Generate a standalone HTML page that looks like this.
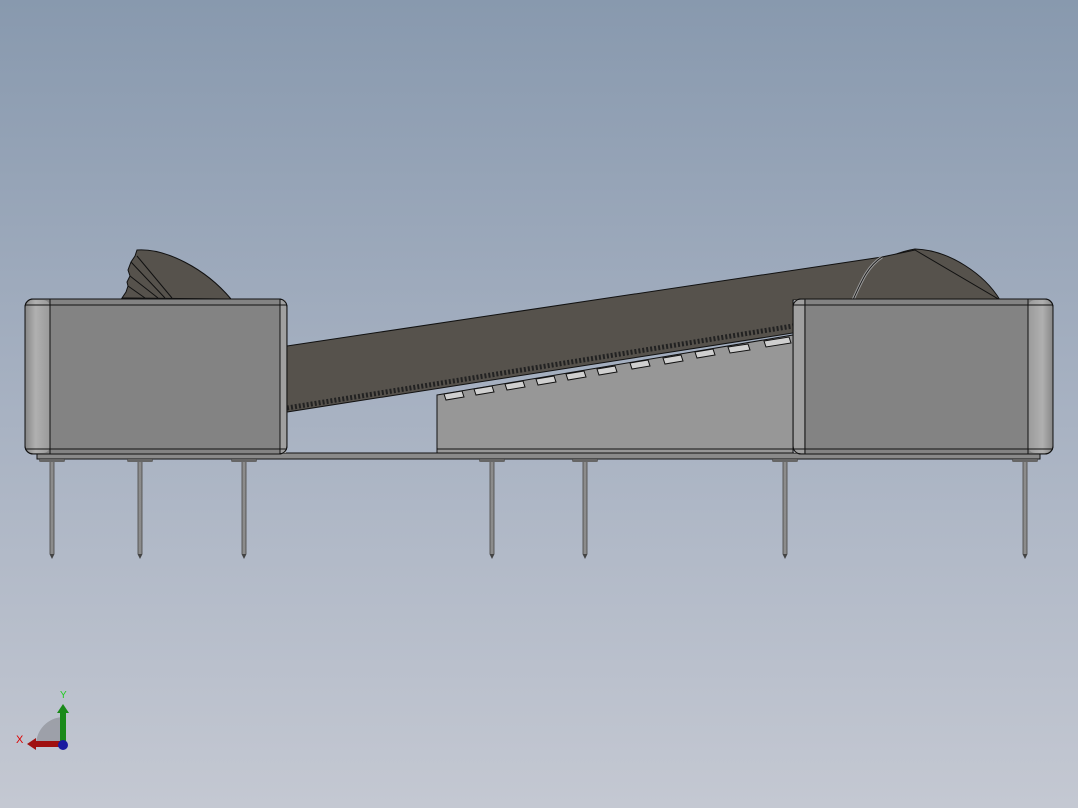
<!DOCTYPE html>
<html><head><style>
html,body{margin:0;padding:0;width:1078px;height:808px;overflow:hidden}
body{background:linear-gradient(#8899ae 0%,#a4afc0 45%,#c4c8d2 100%)}
svg{position:absolute;left:0;top:0}
</style></head><body>
<svg width="1078" height="808" viewBox="0 0 1078 808" xmlns="http://www.w3.org/2000/svg">
<defs>
<linearGradient id="pin" x1="0" x2="1"><stop offset="0" stop-color="#555"/><stop offset=".5" stop-color="#999"/><stop offset="1" stop-color="#555"/></linearGradient>
<linearGradient id="edgeL" x1="0" x2="1"><stop offset="0" stop-color="#8a8a8a"/><stop offset=".4" stop-color="#b0b0b0"/><stop offset="1" stop-color="#9a9a9a"/></linearGradient>
<linearGradient id="edgeR" x1="0" x2="1"><stop offset="0" stop-color="#9a9a9a"/><stop offset=".6" stop-color="#b0b0b0"/><stop offset="1" stop-color="#8a8a8a"/></linearGradient>
<g id="p"><rect x="-13" y="459" width="26" height="3" rx="1.5" fill="#666"/><rect x="-2.5" y="462" width="5" height="92" fill="url(#pin)"/><path d="M-2.5,554 L2.5,554 L0,559 Z" fill="#444"/></g>
</defs>
<!-- left fan -->
<g fill="#56524c" stroke="#111" stroke-width="1">
<path d="M122,298 L126,292 L128,286 L127,282 L130,276 L128,270 L131,262 L135,256 L137,250 C165,248 205,268 231,299 Z"/>
<path d="M130,276 L158,298 M131,262 L165,298 M137,256 L172,298 M128,286 L145,298" fill="none"/>
</g>
<!-- right dome -->
<path d="M855,300 C870,270 880,255 915,249 C950,250 985,275 1000,300 Z" fill="#56524c" stroke="#111"/>
<!-- middle box -->
<path d="M437,395 L793,335 L793,454 L437,454 Z" fill="#979797" stroke="#111"/>
<line x1="437" y1="449" x2="793" y2="449" stroke="#111"/>
<!-- belt -->
<path d="M287,346 L882,257 L915,250 L1000,300 L793,300 L793,333 L287,412 Z" fill="#56524c" stroke="#111"/>
<path d="M287,408 L793,326" stroke="#222" stroke-width="5" stroke-dasharray="2 2"/>
<path d="M853,300 C862,280 868,266 882,257" fill="none" stroke="#999" stroke-width="3"/>
<path d="M853,300 C862,280 868,266 882,257" fill="none" stroke="#111" stroke-width="0.8"/>
<!-- teeth -->
<g fill="#cfcfcf" stroke="#111" stroke-width="1">
<path d="M444,394 l18,-3 l2,6 l-18,3 z"/><path d="M474,389 l18,-3 l2,6 l-18,3 z"/>
<path d="M505,384 l18,-3 l2,6 l-18,3 z"/><path d="M536,379 l18,-3 l2,6 l-18,3 z"/>
<path d="M566,374 l18,-3 l2,6 l-18,3 z"/><path d="M597,369 l18,-3 l2,6 l-18,3 z"/>
<path d="M630,363 l18,-3 l2,6 l-18,3 z"/><path d="M663,358 l18,-3 l2,6 l-18,3 z"/>
<path d="M695,352 l18,-3 l2,6 l-18,3 z"/><path d="M728,347 l20,-3 l2,6 l-20,3 z"/>
<path d="M764,341 l25,-4 l2,6 l-25,4 z"/>
</g>
<!-- base strip -->
<rect x="37" y="453" width="1003" height="6" fill="#8a8a8a" stroke="#111"/>
<!-- pins -->
<use href="#p" x="52"/><use href="#p" x="140"/><use href="#p" x="244"/><use href="#p" x="492"/><use href="#p" x="585"/><use href="#p" x="785"/><use href="#p" x="1025"/>
<!-- left box -->
<rect x="25" y="299" width="262" height="155" rx="8" fill="#838383" stroke="#111"/>
<rect x="26" y="300" width="24" height="153" rx="7" fill="url(#edgeL)"/>
<rect x="280" y="300" width="6" height="153" fill="#a0a0a0"/>
<path d="M50,299 V454 M25,305 H287 M25,449 H287 M280,299 V454" stroke="#111" fill="none"/>
<rect x="25" y="299" width="262" height="155" rx="8" fill="none" stroke="#111"/>
<!-- right box -->
<rect x="793" y="299" width="260" height="155" rx="8" fill="#838383" stroke="#111"/>
<rect x="1028" y="300" width="24" height="153" rx="7" fill="url(#edgeR)"/>
<rect x="794" y="300" width="10" height="153" fill="#a0a0a0"/>
<path d="M805,299 V454 M1028,299 V454 M793,305 H1053 M793,449 H1053" stroke="#111" fill="none"/>
<rect x="793" y="299" width="260" height="155" rx="8" fill="none" stroke="#111"/>
<!-- triad -->
<path d="M36,745 A28,28 0 0 1 63,717 L63,745 Z" fill="#8f9299" opacity=".7"/>
<rect x="60" y="712" width="6" height="33" fill="#1a8a1a"/>
<path d="M57,713 L63,704 L69,713 Z" fill="#1a8a1a"/>
<rect x="35" y="741" width="28" height="6" fill="#a01010"/>
<path d="M36,738 L27,744 L36,750 Z" fill="#a01010"/>
<circle cx="63" cy="745" r="5" fill="#1a1aa0"/>
<text x="60" y="698" font-family="Liberation Sans,sans-serif" font-size="10" fill="#2c2">Y</text>
<text x="16" y="743" font-family="Liberation Sans,sans-serif" font-size="11" fill="#d00">X</text>
</svg>
</body></html>
